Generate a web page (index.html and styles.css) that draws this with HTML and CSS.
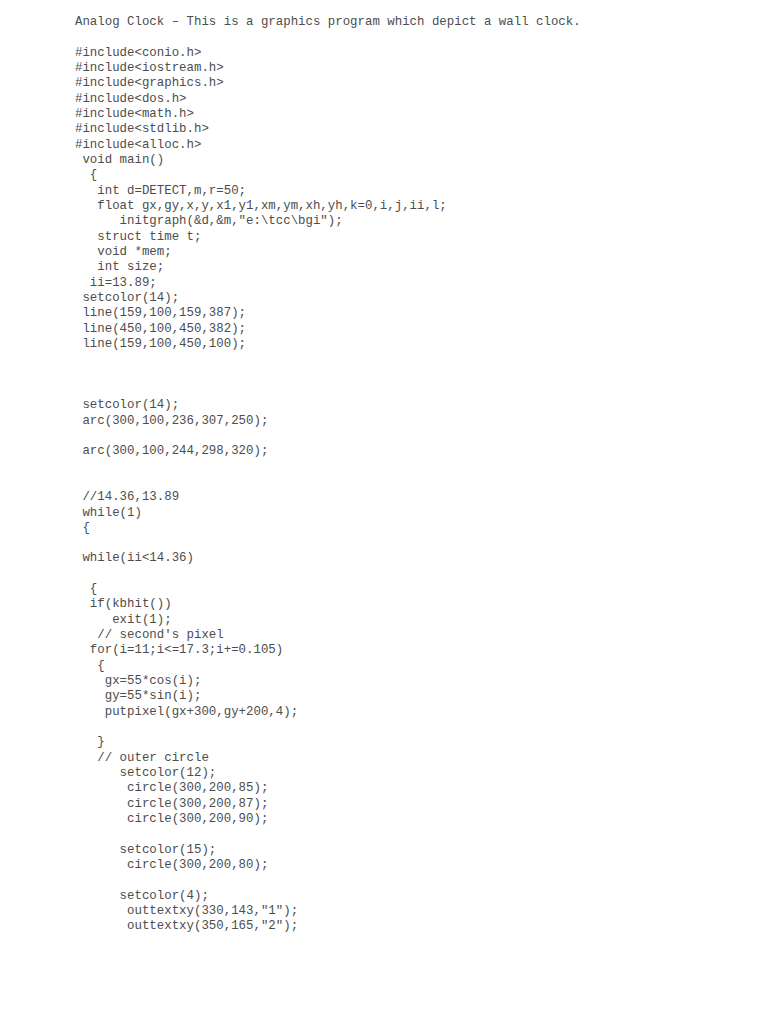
FILE: index.html
```html
<!DOCTYPE html>
<html lang="en">
<head>
<meta charset="utf-8">
<title>Analog Clock</title>
<link rel="stylesheet" href="styles.css">
</head>
<body>
<main class="page">
<pre class="code">Analog Clock – This is a graphics program which depict a wall clock.

#include&lt;conio.h&gt;
#include&lt;iostream.h&gt;
#include&lt;graphics.h&gt;
#include&lt;dos.h&gt;
#include&lt;math.h&gt;
#include&lt;stdlib.h&gt;
#include&lt;alloc.h&gt;
 void main()
  {
   int d=DETECT,m,r=50;
   float gx,gy,x,y,x1,y1,xm,ym,xh,yh,k=0,i,j,ii,l;
      initgraph(&amp;d,&amp;m,"e:\tcc\bgi");
   struct time t;
   void *mem;
   int size;
  ii=13.89;
 setcolor(14);
 line(159,100,159,387);
 line(450,100,450,382);
 line(159,100,450,100);



 setcolor(14);
 arc(300,100,236,307,250);

 arc(300,100,244,298,320);


 //14.36,13.89
 while(1)
 {

 while(ii&lt;14.36)

  {
  if(kbhit())
     exit(1);
   // second's pixel
  for(i=11;i&lt;=17.3;i+=0.105)
   {
    gx=55*cos(i);
    gy=55*sin(i);
    putpixel(gx+300,gy+200,4);

   }
   // outer circle
      setcolor(12);
       circle(300,200,85);
       circle(300,200,87);
       circle(300,200,90);

      setcolor(15);
       circle(300,200,80);

      setcolor(4);
       outtextxy(330,143,"1");
       outtextxy(350,165,"2");</pre>
</main>
</body>
</html>
```

FILE: styles.css
```css
html, body {
  margin: 0;
  padding: 0;
  background: #ffffff;
}

.page {
  padding: 15px 0 0 75px;
}

.code {
  margin: 0;
  font-family: "Liberation Mono", "Courier New", monospace;
  font-size: 12.4px;
  line-height: 15.33px;
  color: #4d4d4d;
  white-space: pre;
}
```
